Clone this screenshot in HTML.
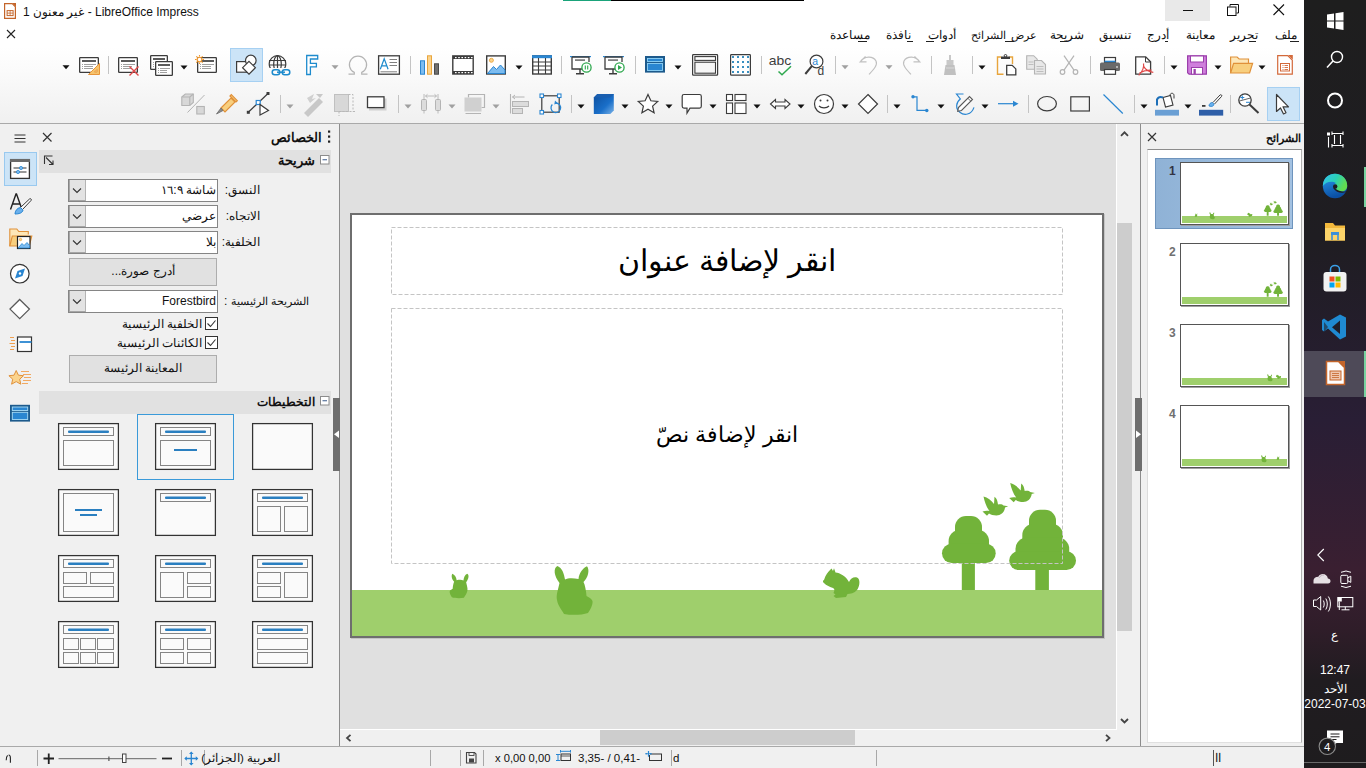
<!DOCTYPE html><html><head><meta charset="utf-8"><style>
html,body{margin:0;padding:0;width:1366px;height:768px;overflow:hidden;background:#fff;font-family:"Liberation Sans",sans-serif;}
.a{position:absolute;}
.t{font-size:12px;line-height:14px;color:#000;white-space:nowrap;}
svg{overflow:visible}
</style></head><body>
<div class="a" style="left:0px;top:0px;width:1304px;height:47px;background:#fff"></div><div class="a" style="left:0px;top:47px;width:1304px;height:76px;background:linear-gradient(#fff 0%,#fbfbfb 30%,#f0f0f0 100%)"></div><div class="a" style="left:0px;top:123px;width:1304px;height:1px;background:#a9a9a9"></div><div class="a" style="left:0px;top:124px;width:340px;height:622px;background:#f0f0f0"></div><div class="a" style="left:339px;top:124px;width:1px;height:622px;background:#8c8c8c"></div><div class="a" style="left:340px;top:124px;width:776px;height:605px;background:#e0e0e0"></div><div class="a" style="left:340px;top:729px;width:776px;height:1px;background:#fff"></div><div class="a" style="left:1116px;top:124px;width:24px;height:622px;background:#f0f0f0"></div><div class="a" style="left:1116px;top:124px;width:1px;height:606px;background:#fff"></div><div class="a" style="left:1117px;top:223px;width:15px;height:408px;background:#cdcdcd"></div><div class="a" style="left:340px;top:730px;width:776px;height:16px;background:#f0f0f0"></div><div class="a" style="left:600px;top:730px;width:255px;height:15px;background:#cdcdcd"></div><div class="a" style="left:1140px;top:124px;width:164px;height:622px;background:#f0f0f0"></div><div class="a" style="left:1140px;top:124px;width:1px;height:622px;background:#8c8c8c"></div><div class="a" style="left:1147px;top:149px;width:155px;height:594px;background:#fff;border-bottom:1px solid #e0e0e0;border-top:1px solid #8c8c8c;border-left:1px solid #dcdcdc;border-right:1px solid #b0b0b0;box-sizing:border-box"></div><div class="a" style="left:0px;top:746px;width:1304px;height:22px;background:#f0f0f0"></div><div class="a" style="left:0px;top:746px;width:1304px;height:1px;background:#a9a9a9"></div><div class="a" style="left:1304px;top:0px;width:62px;height:768px;background:linear-gradient(#1e1e1e 0px,#1f1d22 240px,#291e35 420px,#3a1f31 570px,#2f1d29 630px,#201c20 680px,#1e1c1e 768px)"></div><div class="a" style="left:563px;top:0px;width:48px;height:1px;background:#1aa37a"></div><div class="a" style="left:611px;top:0px;width:193px;height:1px;background:#000"></div><svg class="a" style="left:4px;top:3px" width="12" height="16" viewBox="0 0 12 16"><path d="M0.6 0.6h7.6l3.2 3.2v11.6H0.6z" fill="#fff" stroke="#c4652a" stroke-width="1.2"/><path d="M8.2 0h3.8v3.8z" fill="#c4652a"/><rect x="3.1" y="7.6" width="6" height="5" fill="#fff" stroke="#c4652a" stroke-width="1"/><path d="M3.1 10.1h6M6.1 7.6v5" stroke="#c4652a" stroke-width="0.8"/></svg><div class="a t" style="left:23px;top:4px;font-size:12px;line-height:16px;color:#111">غير معنون 1 - LibreOffice Impress</div><div class="a" style="left:1165px;top:0px;width:45px;height:21px;background:#e9e9e9"></div><div class="a" style="left:1183px;top:10px;width:10px;height:1px;background:#111"></div><svg class="a" style="left:1227px;top:4px" width="12" height="12" viewBox="0 0 12 12"><path d="M3 2.5V0.5h8.5v8.5H9.5" fill="none" stroke="#111" stroke-width="1"/><rect x="0.5" y="3" width="8.5" height="8.5" fill="none" stroke="#111" stroke-width="1"/></svg><svg class="a" style="left:1273px;top:4px" width="12" height="12" viewBox="0 0 12 12"><path d="M0.5 0.5l10.5 10.5M11 0.5L0.5 11" stroke="#111" stroke-width="1.1"/></svg><svg class="a" style="left:7px;top:30px" width="8" height="8" viewBox="0 0 8 8"><path d="M0 0l8 8M8 0l-8 8" stroke="#222" stroke-width="1.1"/></svg><div class="a t" dir="rtl" style="right:69px;top:27px;font-size:12px;line-height:16px;color:#111">ملف</div><div class="a t" dir="rtl" style="right:108px;top:27px;font-size:12px;line-height:16px;color:#111">تحرير</div><div class="a t" dir="rtl" style="right:151px;top:27px;font-size:12px;line-height:16px;color:#111">معاينة</div><div class="a t" dir="rtl" style="right:197px;top:27px;font-size:12px;line-height:16px;color:#111">أدرج</div><div class="a t" dir="rtl" style="right:235px;top:27px;font-size:12px;line-height:16px;color:#111">تنسيق</div><div class="a t" dir="rtl" style="right:282px;top:27px;font-size:12px;line-height:16px;color:#111">شريحة</div><div class="a t" dir="rtl" style="right:329px;top:27px;font-size:11.2px;word-spacing:2px;line-height:16px;color:#111">عرض الشرائح</div><div class="a t" dir="rtl" style="right:410px;top:27px;font-size:12px;line-height:16px;color:#111">أدوات</div><div class="a t" dir="rtl" style="right:455px;top:27px;font-size:12px;line-height:16px;color:#111">نافذة</div><div class="a t" dir="rtl" style="right:496px;top:27px;font-size:12px;line-height:16px;color:#111">مساعدة</div><div class="a" style="left:1290px;top:41px;width:9px;height:1px;background:#222"></div><div class="a" style="left:1249px;top:41px;width:7px;height:1px;background:#222"></div><div class="a" style="left:1165px;top:41px;width:3px;height:1px;background:#222"></div><div class="a" style="left:1060px;top:41px;width:7px;height:1px;background:#222"></div><div class="a" style="left:1005px;top:41px;width:9px;height:1px;background:#222"></div><div class="a" style="left:926px;top:41px;width:8px;height:1px;background:#222"></div><div class="a" style="left:907px;top:41px;width:6px;height:1px;background:#222"></div><div class="a" style="left:858px;top:41px;width:9px;height:1px;background:#222"></div><div class="a" style="left:230px;top:48px;width:33px;height:34px;background:#cce4f7;border:1px solid #a6d0f2;box-sizing:border-box"></div><div class="a" style="left:1267px;top:87px;width:33px;height:34px;background:#cce4f7;border:1px solid #a6d0f2;box-sizing:border-box"></div><div class="a t" dir="rtl" style="right:1044px;top:130px;font-weight:bold;font-size:12.5px;line-height:16px;color:#111">الخصائص</div><div class="a" style="left:4px;top:152px;width:33px;height:34px;background:#cce4f7;border:1px solid #99c9ef;box-sizing:border-box"></div><div class="a" style="left:39px;top:150px;width:292px;height:23px;background:#e1e1e1"></div><div class="a" style="left:39px;top:391px;width:292px;height:23px;background:#e1e1e1"></div><div class="a t" dir="rtl" style="right:1051px;top:153px;font-weight:bold;font-size:12.5px;line-height:16px;color:#111">شريحة</div><div class="a t" dir="rtl" style="right:1051px;top:394px;font-weight:bold;font-size:12px;line-height:16px;color:#111">التخطيطات</div><div class="a" style="left:68px;top:179px;width:150px;height:23px;background:#fff;border:1px solid #858585;box-sizing:border-box"></div><div class="a" style="left:69px;top:180px;width:17px;height:21px;background:#e3e3e3;border-left:1px solid #a6a6a6;border-right:1px solid #b4b4b4;border-bottom:1px solid #a6a6a6;box-sizing:border-box"></div><div class="a t" dir="rtl" style="right:1150px;top:183px;font-size:12px;line-height:15px;color:#111">شاشة ١٦:٩</div><div class="a" style="left:68px;top:205px;width:150px;height:23px;background:#fff;border:1px solid #858585;box-sizing:border-box"></div><div class="a" style="left:69px;top:206px;width:17px;height:21px;background:#e3e3e3;border-left:1px solid #a6a6a6;border-right:1px solid #b4b4b4;border-bottom:1px solid #a6a6a6;box-sizing:border-box"></div><div class="a t" dir="rtl" style="right:1150px;top:209px;font-size:12px;line-height:15px;color:#111">عرضي</div><div class="a" style="left:68px;top:231px;width:150px;height:23px;background:#fff;border:1px solid #858585;box-sizing:border-box"></div><div class="a" style="left:69px;top:232px;width:17px;height:21px;background:#e3e3e3;border-left:1px solid #a6a6a6;border-right:1px solid #b4b4b4;border-bottom:1px solid #a6a6a6;box-sizing:border-box"></div><div class="a t" dir="rtl" style="right:1150px;top:235px;font-size:12px;line-height:15px;color:#111">بلا</div><div class="a" style="left:68px;top:290px;width:150px;height:23px;background:#fff;border:1px solid #858585;box-sizing:border-box"></div><div class="a" style="left:69px;top:291px;width:17px;height:21px;background:#e3e3e3;border-left:1px solid #a6a6a6;border-right:1px solid #b4b4b4;border-bottom:1px solid #a6a6a6;box-sizing:border-box"></div><div class="a t" dir="rtl" style="right:1150px;top:294px;font-size:12px;line-height:15px;color:#111">Forestbird</div><div class="a t" dir="rtl" style="right:1106px;top:183px;font-size:12px;line-height:15px;color:#111">النسق:</div><div class="a t" dir="rtl" style="right:1106px;top:209px;font-size:12px;line-height:15px;color:#111">الاتجاه:</div><div class="a t" dir="rtl" style="right:1106px;top:235px;font-size:12px;line-height:15px;color:#111">الخلفية:</div><div class="a t" dir="rtl" style="right:1057px;top:294px;font-size:11.4px;line-height:15px;color:#111">الشريحة الرئيسية</div><div class="a t" style="left:224px;top:294px;font-size:12px;line-height:15px;color:#111">:</div><div class="a" style="left:69px;top:258px;width:148px;height:28px;background:#e1e1e1;border:1px solid #adadad;box-sizing:border-box"></div><div class="a t" dir="rtl" style="left:69px;width:148px;text-align:center;top:264px;font-size:12px;line-height:15px;color:#111">أدرج صورة...</div><div class="a" style="left:69px;top:355px;width:148px;height:28px;background:#e1e1e1;border:1px solid #adadad;box-sizing:border-box"></div><div class="a t" dir="rtl" style="left:69px;width:148px;text-align:center;top:361px;font-size:12px;line-height:15px;color:#111">المعاينة الرئيسة</div><div class="a" style="left:205px;top:317px;width:13px;height:13px;background:#fff;border:1px solid #333;box-sizing:border-box"></div><div class="a t" dir="rtl" style="right:1164px;top:316px;font-size:11.7px;line-height:15px;color:#111">الخلفية الرئيسية</div><div class="a" style="left:205px;top:336px;width:13px;height:13px;background:#fff;border:1px solid #333;box-sizing:border-box"></div><div class="a t" dir="rtl" style="right:1164px;top:335px;font-size:11.7px;line-height:15px;color:#111">الكائنات الرئيسية</div><div class="a" style="left:137px;top:414px;width:97px;height:66px;border:1px solid #3a9ad9;box-sizing:border-box"></div><div class="a" style="left:333px;top:398px;width:7px;height:73px;background:#6e6e6e"></div><div class="a" style="left:351px;top:214px;width:754px;height:425px;background:#c4c4c4"></div><div class="a" style="left:350px;top:213px;width:754px;height:425px;background:#fff;border:2px solid #6e6e6e;box-sizing:border-box"></div><div class="a" style="left:352px;top:590px;width:750px;height:46px;background:#9fcf6c"></div><div class="a" dir="rtl" style="left:391px;width:672px;top:243px;text-align:center;font-size:30.2px;line-height:36px;color:#000;white-space:nowrap;font-family:'Liberation Sans',sans-serif">انقر لإضافة عنوان</div><div class="a" dir="rtl" style="left:391px;width:672px;top:422px;text-align:center;font-size:22px;line-height:26px;color:#000;white-space:nowrap;font-family:'Liberation Sans',sans-serif">انقر لإضافة نصّ</div><div class="a" style="left:1135px;top:398px;width:7px;height:73px;background:#6e6e6e"></div><div class="a t" dir="rtl" style="right:65px;top:130px;font-weight:bold;font-size:11.4px;line-height:16px;color:#111">الشرائح</div><div class="a" style="left:1155px;top:158px;width:138px;height:71px;background:linear-gradient(90deg,#8fb2d6,#a3c2e2);border:1px solid #6e94bd;box-sizing:border-box"></div><div class="a" style="left:1181px;top:163px;width:109px;height:63px;background:#a0a0a0"></div><div class="a" style="left:1180px;top:162px;width:109px;height:63px;background:#fff;border:1px solid #555;box-sizing:border-box"></div><div class="a" style="left:1182px;top:216px;width:105px;height:7px;background:#9fcf6c"></div><div class="a t" style="left:1169px;top:164px;font-size:12px;line-height:14px;font-weight:bold;color:#333344">1</div><div class="a" style="left:1181px;top:244px;width:109px;height:63px;background:#a0a0a0"></div><div class="a" style="left:1180px;top:243px;width:109px;height:63px;background:#fff;border:1px solid #555;box-sizing:border-box"></div><div class="a" style="left:1182px;top:297px;width:105px;height:7px;background:#9fcf6c"></div><div class="a t" style="left:1169px;top:245px;font-size:12px;line-height:14px;font-weight:bold;color:#707070">2</div><div class="a" style="left:1181px;top:325px;width:109px;height:63px;background:#a0a0a0"></div><div class="a" style="left:1180px;top:324px;width:109px;height:63px;background:#fff;border:1px solid #555;box-sizing:border-box"></div><div class="a" style="left:1182px;top:378px;width:105px;height:7px;background:#9fcf6c"></div><div class="a t" style="left:1169px;top:326px;font-size:12px;line-height:14px;font-weight:bold;color:#707070">3</div><div class="a" style="left:1181px;top:406px;width:109px;height:63px;background:#a0a0a0"></div><div class="a" style="left:1180px;top:405px;width:109px;height:63px;background:#fff;border:1px solid #555;box-sizing:border-box"></div><div class="a" style="left:1182px;top:459px;width:105px;height:7px;background:#9fcf6c"></div><div class="a t" style="left:1169px;top:407px;font-size:12px;line-height:14px;font-weight:bold;color:#707070">4</div><div class="a" style="left:37px;top:750px;width:1px;height:16px;background:#a8a8a8"></div><div class="a" style="left:181px;top:750px;width:1px;height:16px;background:#a8a8a8"></div><div class="a" style="left:204px;top:750px;width:1px;height:16px;background:#a8a8a8"></div><div class="a" style="left:430px;top:750px;width:1px;height:16px;background:#a8a8a8"></div><div class="a" style="left:460px;top:750px;width:1px;height:16px;background:#a8a8a8"></div><div class="a" style="left:483px;top:750px;width:1px;height:16px;background:#a8a8a8"></div><div class="a" style="left:671px;top:750px;width:1px;height:16px;background:#a8a8a8"></div><div class="a" style="left:876px;top:750px;width:1px;height:16px;background:#a8a8a8"></div><div class="a" style="left:1213px;top:750px;width:1px;height:16px;background:#555"></div><div class="a t" dir="rtl" style="right:1086px;top:751px;font-size:11.5px;line-height:15px;color:#111">العربية (الجزائر)</div><div class="a t" style="left:495px;top:751px;font-size:11.2px;line-height:15px;color:#111">x 0,00 0,00</div><div class="a t" style="left:578px;top:751px;font-size:11.5px;line-height:15px;color:#111">3,35- / 0,41-</div><div class="a t" style="left:673px;top:751px;font-size:11.5px;line-height:15px;color:#111">d</div><div class="a t" style="left:1215px;top:751px;font-size:12px;line-height:15px;color:#111">اا</div><div class="a" style="left:1364px;top:167px;width:2px;height:40px;background:#78d3a0"></div><div class="a" style="left:1304px;top:351px;width:62px;height:46px;background:#4e4a58"></div><div class="a" style="left:1364px;top:351px;width:2px;height:46px;background:#78d3a0"></div><div class="a t" style="left:1331px;top:627px;font-size:11.5px;line-height:16px;color:#fff">ع</div><div class="a t" style="left:1304px;width:62px;text-align:center;top:663px;font-size:12px;line-height:15px;color:#fff">12:47</div><div class="a t" dir="rtl" style="left:1304px;width:62px;text-align:center;top:682px;font-size:12px;line-height:15px;color:#fff">الأحد</div><div class="a t" style="left:1304px;width:62px;text-align:center;top:697px;font-size:12px;line-height:15px;color:#fff">2022-07-03</div><div class="a" style="left:1304px;top:762px;width:62px;height:1px;background:#6a6a6a"></div><svg class="a" style="left:0;top:0" width="1366" height="768" viewBox="0 0 1366 768"><path d="M62.5 65.3h7l-3.5 4z" fill="#111"/><rect x="79.65" y="57.65" width="18.7" height="14.7" rx="0.6" fill="#fff" stroke="#3c3c3c" stroke-width="1.3"/><rect x="82" y="60" width="14" height="2" fill="#5a5a5a"/><rect x="82" y="64" width="1" height="1" fill="#a0a0a0"/><rect x="84" y="64" width="12" height="1" fill="#a0a0a0"/><rect x="82" y="66" width="1" height="1" fill="#a0a0a0"/><rect x="84" y="66" width="9" height="1" fill="#a0a0a0"/><rect x="82" y="68" width="1" height="1" fill="#a0a0a0"/><rect x="84" y="68" width="9" height="1" fill="#a0a0a0"/><path d="M99.5 63.5v11h-11z" fill="#f6c46e" stroke="#e8953a" stroke-width="1"/><path d="M97 69.5v2.5h-2.5z" fill="#fde7b8" stroke="#e8953a" stroke-width="0.9"/><rect x="118.65" y="57.65" width="18.7" height="14.7" rx="0.6" fill="#fff" stroke="#3c3c3c" stroke-width="1.3"/><rect x="121" y="60" width="14" height="2" fill="#5a5a5a"/><rect x="121" y="64" width="1" height="1" fill="#a0a0a0"/><rect x="123" y="64" width="12" height="1" fill="#a0a0a0"/><rect x="121" y="66" width="1" height="1" fill="#a0a0a0"/><rect x="123" y="66" width="9" height="1" fill="#a0a0a0"/><rect x="121" y="68" width="1" height="1" fill="#a0a0a0"/><rect x="123" y="68" width="9" height="1" fill="#a0a0a0"/><path d="M129.5 66.5l9 9M138.5 66.5l-9 9" stroke="#e04848" stroke-width="1.4"/><rect x="150.65" y="55.65" width="16.7" height="13.7" rx="0.6" fill="#fff" stroke="#3c3c3c" stroke-width="1.3"/><rect x="153" y="58" width="12" height="2" fill="#5a5a5a"/><rect x="153" y="62" width="1" height="1" fill="#a0a0a0"/><rect x="155" y="62" width="10" height="1" fill="#a0a0a0"/><rect x="153" y="64" width="1" height="1" fill="#a0a0a0"/><rect x="155" y="64" width="7" height="1" fill="#a0a0a0"/><rect x="153" y="66" width="1" height="1" fill="#a0a0a0"/><rect x="155" y="66" width="7" height="1" fill="#a0a0a0"/><rect x="155.65" y="61.65" width="16.7" height="13.7" rx="0.6" fill="#fff" stroke="#3c3c3c" stroke-width="1.3"/><rect x="158" y="64" width="12" height="2" fill="#5a5a5a"/><rect x="158" y="68" width="1" height="1" fill="#a0a0a0"/><rect x="160" y="68" width="10" height="1" fill="#a0a0a0"/><rect x="158" y="70" width="1" height="1" fill="#a0a0a0"/><rect x="160" y="70" width="7" height="1" fill="#a0a0a0"/><rect x="158" y="72" width="1" height="1" fill="#a0a0a0"/><rect x="160" y="72" width="7" height="1" fill="#a0a0a0"/><path d="M180.5 65.5h7l-3.5 4z" fill="#111"/><rect x="197.65" y="57.65" width="18.7" height="14.7" rx="0.6" fill="#fff" stroke="#3c3c3c" stroke-width="1.3"/><rect x="200" y="60" width="14" height="2" fill="#5a5a5a"/><rect x="200" y="64" width="1" height="1" fill="#a0a0a0"/><rect x="202" y="64" width="12" height="1" fill="#a0a0a0"/><rect x="200" y="66" width="1" height="1" fill="#a0a0a0"/><rect x="202" y="66" width="9" height="1" fill="#a0a0a0"/><rect x="200" y="68" width="1" height="1" fill="#a0a0a0"/><rect x="202" y="68" width="9" height="1" fill="#a0a0a0"/><g stroke="#f0962a" stroke-width="1.1"><circle cx="199.5" cy="59.5" r="2.3" fill="#fff"/><path d="M199.5 55v1.6M199.5 62.4v1.6M195 59.5h1.6M202.4 59.5h1.6M196.3 56.3l1.1 1.1M201.6 61.6l1.1 1.1M196.3 62.7l1.1-1.1M201.6 57.4l1.1-1.1"/></g><rect x="236.6" y="61.6" width="10.2" height="10.6" fill="#fff" stroke="#3c3c3c" stroke-width="1.2"/><circle cx="250.8" cy="60.5" r="5.3" fill="#fff" stroke="#3c3c3c" stroke-width="1.2"/><path d="M249 61.3l6.4 6.4-6.4 6.4-6.4-6.4z" fill="#fff" stroke="#3c3c3c" stroke-width="1.2"/><defs><clipPath id="gc"><rect x="260" y="50" width="40" height="18"/></clipPath></defs><g fill="none" stroke="#3c3c3c" stroke-width="1.2" clip-path="url(#gc)"><circle cx="277.5" cy="64" r="8.3"/><ellipse cx="277.5" cy="64" rx="3.8" ry="8.3"/><path d="M269 60.5h17M269 65h17M277.5 55.5v13"/></g><g fill="none" stroke="#1e8bcd" stroke-width="1.5"><rect x="272.2" y="69.7" width="7.6" height="5" rx="2.5"/><rect x="282.2" y="69.7" width="7.6" height="5" rx="2.5"/><path d="M277 72.2h8"/></g><path d="M306.7 55.5h11v3.5h-7.3v4.3h6v3.5h-6v7.7h-3.7z" fill="#fff" stroke="#1e8bcd" stroke-width="1.3"/><path d="M331.5 65.3h7l-3.5 4z" fill="#a0a0a0"/><path d="M348.5 74.2h5.8v-1.8a8.6 8.6 0 1 1 7.4 0v1.8h5.8" fill="none" stroke="#b4b4b4" stroke-width="1.2"/><rect x="378.6" y="55.8" width="20.8" height="18.4" fill="#fff" stroke="#3c3c3c" stroke-width="1.3"/><path d="M380.3 69.3l3.9-10.5 3.9 10.5M381.6 65.8h5.2" fill="none" stroke="#1e8bcd" stroke-width="1.2"/><path d="M389.5 59.5h7.5M389.5 62.5h7.5M389.5 65.5h7.5M380.5 71.8h16.5" stroke="#707070" stroke-width="0.9"/><rect x="420.5" y="60.8" width="4" height="13.4" fill="#7cbcf0" stroke="#2a86d1" stroke-width="1"/><rect x="427.5" y="55.8" width="4" height="18.4" fill="#fbd38c" stroke="#e8a53c" stroke-width="1"/><rect x="434.5" y="63.8" width="4" height="10.4" fill="#707070" stroke="#4a4a4a" stroke-width="1"/><rect x="452.8" y="55.9" width="20.4" height="18.1" fill="#fff" stroke="#3c3c3c" stroke-width="1.4"/><rect x="453" y="56" width="20" height="3" fill="#3c3c3c"/><rect x="453" y="71" width="20" height="3" fill="#3c3c3c"/><rect x="455.0" y="57" width="1.6" height="1.2" fill="#fff"/><rect x="455.0" y="72" width="1.6" height="1.2" fill="#fff"/><rect x="458.2" y="57" width="1.6" height="1.2" fill="#fff"/><rect x="458.2" y="72" width="1.6" height="1.2" fill="#fff"/><rect x="461.4" y="57" width="1.6" height="1.2" fill="#fff"/><rect x="461.4" y="72" width="1.6" height="1.2" fill="#fff"/><rect x="464.6" y="57" width="1.6" height="1.2" fill="#fff"/><rect x="464.6" y="72" width="1.6" height="1.2" fill="#fff"/><rect x="467.8" y="57" width="1.6" height="1.2" fill="#fff"/><rect x="467.8" y="72" width="1.6" height="1.2" fill="#fff"/><rect x="471.0" y="57" width="1.6" height="1.2" fill="#fff"/><rect x="471.0" y="72" width="1.6" height="1.2" fill="#fff"/><rect x="486.7" y="55.9" width="18.6" height="18.1" fill="#fff" stroke="#3c3c3c" stroke-width="1.4"/><circle cx="491.4" cy="60.3" r="2" fill="#fbd38c" stroke="#e8a53c" stroke-width="0.9"/><path d="M487.5 73.5l6-7 3 3 4-4.5 4.5 5v3.5z" fill="#7cbcf0" stroke="#2a86d1" stroke-width="1"/><path d="M515.5 65.5h7l-3.5 4z" fill="#111"/><rect x="532.7" y="55.9" width="18.6" height="18.1" fill="#fff" stroke="#3c3c3c" stroke-width="1.4"/><rect x="532" y="55.2" width="20" height="3" fill="#2a86d1"/><path d="M533 62h18M533 66h18M533 70h18M538.5 58v16M545.5 58v16" stroke="#3c3c3c" stroke-width="1.1"/><path d="M570 56.6h21" stroke="#2a86d1" stroke-width="1.2"/><path d="M572 57v12h13" fill="#fff" stroke="#3c3c3c" stroke-width="1.3"/><path d="M572 57h17v5" fill="none" stroke="#3c3c3c" stroke-width="1.3"/><rect x="575" y="59.3" width="10" height="1.6" fill="#707070"/><path d="M580 69v4.5M576 73.8h8" stroke="#3c3c3c" stroke-width="1.4"/><circle cx="586.5" cy="67.5" r="4.6" fill="#fff" stroke="#2ea84e" stroke-width="1.3"/><path d="M585.3 65.5v4M587.7 65.5v4" stroke="#2ea84e" stroke-width="1.1"/><path d="M603 56.6h21" stroke="#2a86d1" stroke-width="1.2"/><path d="M605 57v12h13" fill="#fff" stroke="#3c3c3c" stroke-width="1.3"/><path d="M605 57h17v5" fill="none" stroke="#3c3c3c" stroke-width="1.3"/><rect x="608" y="59.3" width="10" height="1.6" fill="#707070"/><path d="M613 69v4.5M609 73.8h8" stroke="#3c3c3c" stroke-width="1.4"/><circle cx="619.5" cy="67.5" r="4.6" fill="#fff" stroke="#2ea84e" stroke-width="1.3"/><path d="M618 65v5l4-2.5z" fill="#2ea84e"/><rect x="645" y="56" width="20" height="16.6" fill="#1d5a8c"/><rect x="647.5" y="58.5" width="15" height="3" fill="#2a86d1" stroke="#8fd3f7" stroke-width="0.9"/><rect x="647.5" y="63.5" width="15" height="7" fill="#2a86d1" stroke="#8fd3f7" stroke-width="0.9"/><path d="M674.5 65.5h7l-3.5 4z" fill="#111"/><rect x="692.6" y="54.6" width="25" height="20.6" rx="0.8" fill="#fff" stroke="#3c3c3c" stroke-width="1.2"/><rect x="694.9" y="56.6" width="20.6" height="3.8" fill="none" stroke="#3c3c3c" stroke-width="1.1"/><rect x="694.9" y="62.2" width="20.6" height="11" fill="#f6f6f6" stroke="#3c3c3c" stroke-width="1.1"/><rect x="730.6" y="54.6" width="19.8" height="20.6" rx="0.8" fill="#fff" stroke="#3c3c3c" stroke-width="1.2"/><rect x="732" y="56" width="2" height="2" fill="#3a8fc0"/><rect x="732" y="61" width="2" height="2" fill="#3a8fc0"/><rect x="732" y="66" width="2" height="2" fill="#3a8fc0"/><rect x="732" y="71" width="2" height="2" fill="#3a8fc0"/><rect x="737" y="56" width="2" height="2" fill="#3a8fc0"/><rect x="737" y="61" width="2" height="2" fill="#3a8fc0"/><rect x="737" y="66" width="2" height="2" fill="#3a8fc0"/><rect x="737" y="71" width="2" height="2" fill="#3a8fc0"/><rect x="742" y="56" width="2" height="2" fill="#3a8fc0"/><rect x="742" y="61" width="2" height="2" fill="#3a8fc0"/><rect x="742" y="66" width="2" height="2" fill="#3a8fc0"/><rect x="742" y="71" width="2" height="2" fill="#3a8fc0"/><rect x="747" y="56" width="2" height="2" fill="#3a8fc0"/><rect x="747" y="61" width="2" height="2" fill="#3a8fc0"/><rect x="747" y="66" width="2" height="2" fill="#3a8fc0"/><rect x="747" y="71" width="2" height="2" fill="#3a8fc0"/><text x="768.8" y="65.2" font-family="Liberation Sans" font-size="12.6" fill="#3c3c3c" textLength="22.5" lengthAdjust="spacingAndGlyphs">abc</text><path d="M778.5 71.5l3.5 3.3 9-8.5" fill="none" stroke="#2ea84e" stroke-width="1.5"/><circle cx="816.5" cy="61.5" r="6.4" fill="#fff" stroke="#3c3c3c" stroke-width="1.2"/><path d="M811.8 66.2l-6.5 7.8" stroke="#3c3c3c" stroke-width="2"/><text x="812.3" y="65" font-family="Liberation Sans" font-size="10.5" fill="#2a86d1">a</text><text x="817.5" y="75" font-family="Liberation Sans" font-size="12" fill="#3c3c3c">d</text><path d="M841.5 65.3h7l-3.5 4z" fill="#a0a0a0"/><path d="M865.5 56.3L860.2 61.8h6.3M860.5 61.5C864 56 873 55.5 876 61c2 4-2.5 8.5-7 13.4" fill="none" stroke="#c0c0c0" stroke-width="1.2"/><path d="M885.5 65.3h7l-3.5 4z" fill="#a0a0a0"/><path d="M914.5 56.3L919.8 61.8h-6.3M919.5 61.5C916 56 907 55.5 904 61c-2 4 2.5 8.5 7 13.4" fill="none" stroke="#c0c0c0" stroke-width="1.2"/><path d="M949 55h2v5h2.5v5h-7v-5h2.5z" fill="#c8c8c8"/><path d="M945.5 65h9l1.5 10h-12z" fill="#c0c0c0"/><path d="M946 68h8.5" stroke="#e0e0e0" stroke-width="0.8"/><path d="M978.5 65.5h7l-3.5 4z" fill="#111"/><path d="M1001 57h-3.5v17.3h6" fill="none" stroke="#e8a53c" stroke-width="1.4"/><path d="M1009.5 57h3v7" fill="none" stroke="#e8a53c" stroke-width="1.4"/><path d="M1001 56.5h9v2.5h-9z" fill="#3c3c3c"/><circle cx="1005.5" cy="55.8" r="1.3" fill="none" stroke="#3c3c3c" stroke-width="1"/><path d="M1006.7 65.3h5.5l3.6 3.6v6h-9.1z" fill="#fff" stroke="#3c3c3c" stroke-width="1.3"/><path d="M1026.7 55.7h7l3.5 3.5v10h-10.5z" fill="#e8e8e8" stroke="#b4b4b4" stroke-width="1.1"/><path d="M1034.5 60.5h7l4 4v9.5h-11z" fill="#e8e8e8" stroke="#b4b4b4" stroke-width="1.1"/><path d="M1036.5 66.5h7M1036.5 69h7M1036.5 71.5h7M1028.5 62h5M1028.5 64.5h5" stroke="#b4b4b4" stroke-width="0.8"/><g fill="none" stroke="#b4b4b4" stroke-width="1.2"><circle cx="1062.5" cy="72" r="2.3"/><circle cx="1075.5" cy="72" r="2.3"/><path d="M1064 70.2l10-14.5M1074 70.2l-10-14.5"/></g><rect x="1104.5" y="57.5" width="11" height="5" fill="#fff" stroke="#3c3c3c" stroke-width="1.2"/><path d="M1104.5 61.5h11" stroke="#2a86d1" stroke-width="1.6"/><rect x="1100" y="62.5" width="20" height="8.5" rx="1.5" fill="#6a6a6a"/><rect x="1104.5" y="69.5" width="11" height="4.8" fill="#fff" stroke="#3c3c3c" stroke-width="1.2"/><rect x="1116" y="66.5" width="2" height="1" fill="#fff"/><path d="M1135.7 56.9h10l4.9 4.9v12.3h-14.9z" fill="#fff" stroke="#3c3c3c" stroke-width="1.3"/><path d="M1145.5 57v5h5" fill="none" stroke="#3c3c3c" stroke-width="1"/><path d="M1143.5 63.5c0.8 3.5-1.2 8-4.8 11.8M1143.8 66.5c1.5 3 4.5 5.2 9.5 5.8M1139.5 73c3-1.8 8-3.2 12-2.8" fill="none" stroke="#e04848" stroke-width="1.2"/><path d="M1170.5 65.5h7l-3.5 4z" fill="#111"/><path d="M1187.6 55.8h18.8v18.4h-17.3l-1.5-1.5z" fill="#cf7fdc" stroke="#9b3fab" stroke-width="1.2"/><rect x="1190.5" y="56" width="13" height="6" fill="#fff" stroke="#9b3fab" stroke-width="1"/><rect x="1191.5" y="67.5" width="11" height="6.7" fill="#fff" stroke="#9b3fab" stroke-width="1"/><rect x="1193.5" y="69" width="2.3" height="5" fill="#9b3fab"/><path d="M1214.5 65.5h7l-3.5 4z" fill="#111"/><path d="M1230.6 73V57h6.5l2 2h9.4v4" fill="#fde7b8" stroke="#e0913a" stroke-width="1.2"/><path d="M1230.6 73l3-9.6h19l-3 9.6z" fill="#f8cf7e" stroke="#e0913a" stroke-width="1.2"/><path d="M1258.5 65.5h7l-3.5 4z" fill="#111"/><path d="M1277.7 55.6h10l4.6 4.6v13.9h-14.6z" fill="#fff" stroke="#d3693a" stroke-width="1.2"/><path d="M1288 55h4.8v4.8z" fill="#d3693a"/><rect x="1280.5" y="63.5" width="9" height="7.5" fill="#fff" stroke="#d3693a" stroke-width="1"/><path d="M1282.5 65.5h1M1284.5 65.5h3.5M1282.5 67.5h1M1284.5 67.5h3.5M1282.5 69.5h1M1284.5 69.5h3.5" stroke="#d3693a" stroke-width="0.9"/><g fill="#d8d8d8" stroke="#b4b4b4" stroke-width="1.1"><path d="M181.8 97l3.5-3h8v8.5l-3.5 3h-8z"/><path d="M181.8 97h8v8.5M189.8 97l3.5-3"/><rect x="196.8" y="106.5" width="7.5" height="7.5"/></g><path d="M204.5 95L187.5 112.5" stroke="#b4b4b4" stroke-width="1"/><path d="M221 108l10-10 4 4-10 10z" fill="#f8cf7e" stroke="#e0913a" stroke-width="1.2"/><path d="M230 96l6 6 1.3-1.3-6-6z" fill="#f8cf7e" stroke="#e0913a" stroke-width="1.2"/><path d="M221 108l-4.5 6 6.5-3.5z" fill="#8a8a8a" stroke="#6a6a6a" stroke-width="0.8"/><path d="M248.3 112.3L268 93.5" stroke="#3c3c3c" stroke-width="1.2"/><rect x="246.8" y="110.8" width="3" height="3" fill="#3c3c3c"/><rect x="266.5" y="92" width="3" height="3" fill="#3c3c3c"/><rect x="256.2" y="100.5" width="4" height="4" fill="#fff" stroke="#2a86d1" stroke-width="1.2"/><path d="M260 104.5v10.5l8.5-4.5z" fill="#fff" stroke="#3c3c3c" stroke-width="1.2"/><path d="M286.5 104.6h7l-3.5 4z" fill="#a0a0a0"/><path d="M304 113l15-15 4 4-15 15z" fill="#c8c8c8"/><path d="M316 94l7 0-3 4z" fill="#c8c8c8"/><path d="M307 98l7-4-2 5 4-1-6 5z" fill="#d0d0d0"/><rect x="334.5" y="94.5" width="14" height="17" fill="#d8d8d8" stroke="#c0c0c0" stroke-width="1"/><path d="M348.5 94.5h4.5v17M339 111.5v4.5M339 111.5h17" fill="none" stroke="#b8b8b8" stroke-width="1" stroke-dasharray="2 1.5"/><rect x="369" y="98.5" width="17.5" height="12" fill="#d0d0d0"/><rect x="367.5" y="96.8" width="16.5" height="10.8" fill="#fff" stroke="#3c3c3c" stroke-width="1.3"/><path d="M404.5 104.5h7l-3.5 4z" fill="#a0a0a0"/><g fill="#dcdcdc" stroke="#b4b4b4" stroke-width="1"><rect x="421.5" y="99.5" width="5" height="11" rx="1"/><rect x="435.5" y="99.5" width="5" height="11" rx="1"/></g><path d="M424 94v5.5M424 110.5v3M438 94v5.5M438 110.5v3M425.5 96h11M425.5 96l2-1.7M425.5 96l2 1.7M436.5 96l-2-1.7M436.5 96l-2 1.7" stroke="#b4b4b4" stroke-width="0.9" fill="none"/><path d="M448.5 104.5h7l-3.5 4z" fill="#a0a0a0"/><path d="M468.5 97.5v-3h16v13h-3" fill="none" stroke="#b4b4b4" stroke-width="1.2"/><rect x="465" y="98" width="16" height="13" fill="#d0d0d0" stroke="#d0d0d0" stroke-width="1"/><path d="M465.5 113.5h15.5" stroke="#b4b4b4" stroke-width="1"/><path d="M492.5 104.5h7l-3.5 4z" fill="#a0a0a0"/><path d="M510.5 94v19.5" stroke="#b4b4b4" stroke-width="1.1"/><rect x="512.5" y="101.5" width="16" height="5" fill="#dcdcdc" stroke="#b4b4b4" stroke-width="1"/><rect x="512.5" y="108.5" width="10" height="5" fill="#dcdcdc" stroke="#b4b4b4" stroke-width="1"/><path d="M512.5 97h12M512.5 97l2.5-2M512.5 97l2.5 2" fill="none" stroke="#b4b4b4" stroke-width="1"/><rect x="541.8" y="95.8" width="17.4" height="16.4" fill="none" stroke="#3c3c3c" stroke-width="1.2"/><g fill="#fff" stroke="#2a86d1" stroke-width="1.1"><rect x="540" y="94" width="3.5" height="3.5"/><rect x="557.5" y="94" width="3.5" height="3.5"/><rect x="540" y="110.5" width="3.5" height="3.5"/></g><path d="M552.3 104.5A4.8 4.8 0 1 0 556 103" fill="none" stroke="#2a86d1" stroke-width="1.3"/><path d="M555 100.5l2.8 2.7-3.5 1.3z" fill="#2a86d1"/><path d="M577.5 104.5h7l-3.5 4z" fill="#111"/><defs><linearGradient id="cg" x1="0" y1="0" x2="1" y2="1"><stop offset="0" stop-color="#0d4f9e"/><stop offset="0.6" stop-color="#1a6fc9"/><stop offset="1" stop-color="#7ab3e8"/></linearGradient></defs><path d="M593.8 97.5l3.5-3.5h16.5v16.5l-3.5 3.5h-16.5z" fill="url(#cg)"/><path d="M597.3 94h16.5l-3.5 3.5h-16.5z" fill="#1a5fb0"/><path d="M621.5 104.5h7l-3.5 4z" fill="#111"/><path d="M648 94.5l2.9 6.3 6.8 0.7-5.1 4.6 1.5 6.7-6.1-3.5-6.1 3.5 1.5-6.7-5.1-4.6 6.8-0.7z" fill="#fff" stroke="#3c3c3c" stroke-width="1.2"/><path d="M665.5 104.5h7l-3.5 4z" fill="#111"/><path d="M684 94.5h15.5a1.8 1.8 0 0 1 1.8 1.8v10a1.8 1.8 0 0 1-1.8 1.8h-9.5l-3 5v-5h-3a1.8 1.8 0 0 1-1.8-1.8v-10a1.8 1.8 0 0 1 1.8-1.8z" fill="#fff" stroke="#3c3c3c" stroke-width="1.2"/><path d="M709.5 104.5h7l-3.5 4z" fill="#111"/><g fill="#fff" stroke="#3c3c3c" stroke-width="1.1"><rect x="726.5" y="94.5" width="6" height="6"/><rect x="735" y="94.5" width="11" height="6"/><rect x="726.5" y="103" width="6" height="10.5"/><rect x="735" y="103" width="11" height="10.5"/></g><path d="M753.5 104.5h7l-3.5 4z" fill="#111"/><path d="M770.5 104l5-4.5v2.5h9.5v-2.5l5 4.5-5 4.5v-2.5h-9.5v2.5z" fill="#fff" stroke="#3c3c3c" stroke-width="1.1"/><path d="M797.5 104.5h7l-3.5 4z" fill="#111"/><circle cx="824" cy="104" r="9.5" fill="#fff" stroke="#3c3c3c" stroke-width="1.2"/><circle cx="820.5" cy="100.5" r="1" fill="#3c3c3c"/><circle cx="827.5" cy="100.5" r="1" fill="#3c3c3c"/><path d="M819 106a6 4 0 0 0 10 0" fill="none" stroke="#3c3c3c" stroke-width="1.2"/><path d="M841.5 104.5h7l-3.5 4z" fill="#111"/><path d="M868 94.5l9.5 9.5-9.5 9.5-9.5-9.5z" fill="#fff" stroke="#3c3c3c" stroke-width="1.2"/><path d="M893.5 104.5h7l-3.5 4z" fill="#111"/><path d="M913 96.8h4v13.6h9.5" fill="none" stroke="#2a86d1" stroke-width="1.2"/><circle cx="913" cy="96.8" r="1.7" fill="#2a86d1"/><circle cx="926.8" cy="110.5" r="1.7" fill="#2a86d1"/><path d="M937.5 104.5h7l-3.5 4z" fill="#111"/><path d="M963.5 94h-7l3.8 5c-4.5 3.5-5 9.5-0.5 13.2 4.2 3.5 11.5 3 14.2-4.8" fill="none" stroke="#2a86d1" stroke-width="1.2"/><path d="M958.5 107.5l11-11 3 3-11 11-3.8 0.8z" fill="#fff" stroke="#5a5a5a" stroke-width="1.1"/><path d="M967.8 98.2l3 3" stroke="#5a5a5a" stroke-width="0.9"/><path d="M981.5 104.5h7l-3.5 4z" fill="#111"/><path d="M998 103.7h16" stroke="#2a86d1" stroke-width="1.2"/><path d="M1013 100.7l5.5 3-5.5 3z" fill="#2a86d1"/><ellipse cx="1047" cy="103.7" rx="9.4" ry="7.2" fill="none" stroke="#3c3c3c" stroke-width="1.2"/><rect x="1070.8" y="96.8" width="18.6" height="14.2" fill="none" stroke="#3c3c3c" stroke-width="1.2"/><path d="M1103.5 94.5l19.3 19" stroke="#2a86d1" stroke-width="1.2"/><path d="M1140.5 104.5h7l-3.5 4z" fill="#111"/><rect x="1155" y="109.8" width="24" height="5.8" fill="#6a9fd4"/><path d="M1163 97.5l7.5-2 2.5 9.5-7.5 2z" fill="#fff" stroke="#3c3c3c" stroke-width="1.1"/><path d="M1170 95.5c0-3 4-3 4 0v3" fill="none" stroke="#3c3c3c" stroke-width="1"/><path d="M1163 97.5c-3-1-5 0-6 2v6" fill="none" stroke="#1d6fb8" stroke-width="2"/><path d="M1184.5 104.5h7l-3.5 4z" fill="#111"/><rect x="1199" y="109.8" width="24.2" height="5.8" fill="#2f5fa8"/><rect x="1202" y="105" width="3.5" height="1.8" fill="#3c3c3c"/><path d="M1209 106c0-2 1.5-3.5 3.5-3.5l1.5 1.5c0 2-2 3-5 2z" fill="#6ab0ec" stroke="#2a86d1" stroke-width="0.9"/><path d="M1213 102.5l7-7.5c1-1 2.5 0.5 1.5 1.5l-7 7.5" fill="#fff" stroke="#3c3c3c" stroke-width="1"/><circle cx="1245" cy="100" r="6.2" fill="#fff" stroke="#3c3c3c" stroke-width="1.3"/><path d="M1249.5 104.5l9 8.5" stroke="#3c3c3c" stroke-width="2"/><path d="M1239.5 101l11-3" stroke="#3c3c3c" stroke-width="0.8"/><path d="M1242.3 95.5v4M1240.3 97.5h4M1246 102.3h4" stroke="#2a86d1" stroke-width="1"/><path d="M1276.5 94.5v17l4-3.5 3 6 2.5-1.2-3-6h5.5z" fill="#fff" stroke="#3c3c3c" stroke-width="1.2" stroke-linejoin="round"/><rect x="108" y="56" width="1" height="18" fill="#c4c4c4"/><rect x="410" y="56" width="1" height="18" fill="#c4c4c4"/><rect x="561" y="56" width="1" height="18" fill="#c4c4c4"/><rect x="635" y="56" width="1" height="18" fill="#c4c4c4"/><rect x="761" y="56" width="1" height="18" fill="#c4c4c4"/><rect x="835" y="56" width="1" height="18" fill="#c4c4c4"/><rect x="931" y="56" width="1" height="18" fill="#c4c4c4"/><rect x="972" y="56" width="1" height="18" fill="#c4c4c4"/><rect x="1090" y="56" width="1" height="18" fill="#c4c4c4"/><rect x="1164" y="56" width="1" height="18" fill="#c4c4c4"/><rect x="280" y="95" width="1" height="18" fill="#c4c4c4"/><rect x="398" y="95" width="1" height="18" fill="#c4c4c4"/><rect x="571" y="95" width="1" height="18" fill="#c4c4c4"/><rect x="887" y="95" width="1" height="18" fill="#c4c4c4"/><rect x="1028" y="95" width="1" height="18" fill="#c4c4c4"/><rect x="1134" y="95" width="1" height="18" fill="#c4c4c4"/><rect x="1230" y="95" width="1" height="18" fill="#c4c4c4"/><path d="M14.5 135h11M14.5 138.5h11M14.5 142h11" stroke="#333" stroke-width="1.1"/><path d="M43 133l8.5 8.5M51.5 133L43 141.5" stroke="#333" stroke-width="1.2"/><rect x="328" y="130.5" width="2.2" height="2.2" fill="#222"/><rect x="328" y="135.5" width="2.2" height="2.2" fill="#222"/><rect x="328" y="140.5" width="2.2" height="2.2" fill="#222"/><rect x="10.6" y="159.6" width="18.8" height="18.8" fill="#fff" stroke="#333" stroke-width="1.3"/><rect x="10" y="159" width="20" height="3" fill="#6a6a6a"/><path d="M13.5 168h13M13.5 172h13" stroke="#333" stroke-width="1.1"/><circle cx="21" cy="168" r="1.6" fill="#7cbcf0" stroke="#2a86d1" stroke-width="0.8"/><circle cx="18" cy="172" r="1.6" fill="#7cbcf0" stroke="#2a86d1" stroke-width="0.8"/><path d="M10.5 209.5l5.5-15.5h0.5l5.5 15.5M12.5 204h8" fill="none" stroke="#222" stroke-width="1.4"/><path d="M20.5 207.5l9-8.5c1-1 2.5 0.5 1.5 1.5l-8.5 9" fill="#fff" stroke="#333" stroke-width="1"/><path d="M15 214c0-3 2-6 5.5-6.5l2.5 2.5c-0.5 3-4 4-8 4z" fill="#6ab0ec" stroke="#2a86d1" stroke-width="1"/><path d="M9.8 246V229h7l2 2.5h9.5v3" fill="#fde7b8" stroke="#e0913a" stroke-width="1.1"/><path d="M9.8 246l2.5-10h19.5l-2.5 10z" fill="#f8cf7e" stroke="#e0913a" stroke-width="1.1"/><rect x="17.5" y="236.5" width="12.5" height="12" fill="#fff" stroke="#222" stroke-width="1.2"/><circle cx="20.5" cy="239.5" r="1.2" fill="#fbd38c" stroke="#e8a53c" stroke-width="0.7"/><path d="M18 248l4-4.5 2 2 3-3 2.5 3v2.5z" fill="#7cbcf0" stroke="#2a86d1" stroke-width="0.8"/><circle cx="19.8" cy="273.7" r="9.3" fill="#fff" stroke="#333" stroke-width="1.2"/><path d="M25 268.5l-2.5 7.5-7.5 2.5 2.5-7.5z" fill="#2a86d1"/><circle cx="20" cy="273.5" r="1.2" fill="#fff"/><path d="M19.7 299.5l9.7 9.6-9.7 9.6-9.7-9.6z" fill="#fff" stroke="#5a5a5a" stroke-width="1.3"/><rect x="17.5" y="337" width="14" height="14.5" fill="#fff" stroke="#333" stroke-width="1.2"/><path d="M19.5 342h12" stroke="#2a86d1" stroke-width="1.8"/><path d="M10 337.5h4M11 340.5h4M9.5 343.5h5.5M11 346.5h4M10 349.5h4" stroke="#f0a050" stroke-width="1"/><path d="M16.2 370.5l2.2 4.7 5.1 0.5-3.8 3.5 1.1 5-4.6-2.6-4.6 2.6 1.1-5-3.8-3.5 5.1-0.5z" fill="#fbd38c" stroke="#e0913a" stroke-width="1"/><path d="M21 371.5h8M23 374.5h8M24 377.5h7M23 380.5h8M22 383.5h6" stroke="#f0a050" stroke-width="0.9"/><rect x="10" y="404.8" width="20" height="16.8" fill="#1d5a8c"/><rect x="12.3" y="407" width="15.4" height="3.5" fill="#2a86d1" stroke="#a8dcf7" stroke-width="0.9"/><rect x="12.3" y="412.3" width="15.4" height="7.2" fill="#2a86d1" stroke="#a8dcf7" stroke-width="0.9"/><rect x="320.5" y="155.5" width="8.5" height="8.5" fill="#fff" stroke="#8c8c8c" stroke-width="1"/><path d="M322.5 159.75h4.5" stroke="#3a5a8a" stroke-width="1"/><rect x="320.5" y="396.5" width="8.5" height="8.5" fill="#fff" stroke="#8c8c8c" stroke-width="1"/><path d="M322.5 400.75h4.5" stroke="#3a5a8a" stroke-width="1"/><path d="M44.5 164v-8h8M46 157.5l7 7M53 160.5v4h-4" fill="none" stroke="#333" stroke-width="1.1"/><path d="M73 188.5l4 4 4-4" fill="none" stroke="#333" stroke-width="1.1"/><path d="M73 214.5l4 4 4-4" fill="none" stroke="#333" stroke-width="1.1"/><path d="M73 240.5l4 4 4-4" fill="none" stroke="#333" stroke-width="1.1"/><path d="M73 299.5l4 4 4-4" fill="none" stroke="#333" stroke-width="1.1"/><path d="M207.5 323.5l3 3 5-6" fill="none" stroke="#333" stroke-width="1.1"/><path d="M207.5 342.5l3 3 5-6" fill="none" stroke="#333" stroke-width="1.1"/><rect x="58.6" y="423.6" width="59.8" height="45.8" fill="#fafafa" stroke="#333" stroke-width="1.25"/><rect x="63.5" y="427.5" width="50" height="8" fill="none" stroke="#858585" stroke-width="1"/><rect x="68" y="430.5" width="41" height="2.5" rx="1" fill="#2a7fc0"/><rect x="63.5" y="440.5" width="50" height="25" fill="none" stroke="#858585" stroke-width="1"/><rect x="155.6" y="423.6" width="59.8" height="45.8" fill="#fafafa" stroke="#333" stroke-width="1.25"/><rect x="160.5" y="427.5" width="50" height="8" fill="none" stroke="#858585" stroke-width="1"/><rect x="165" y="430.5" width="41" height="2.5" rx="1" fill="#2a7fc0"/><rect x="160.5" y="440.5" width="50" height="25" fill="none" stroke="#858585" stroke-width="1"/><rect x="174" y="449" width="23" height="2" fill="#2a7fc0"/><rect x="252.6" y="423.6" width="59.8" height="45.8" fill="#fafafa" stroke="#333" stroke-width="1.25"/><rect x="58.6" y="489.6" width="59.8" height="45.8" fill="#fafafa" stroke="#333" stroke-width="1.25"/><rect x="63.5" y="493.5" width="50" height="38" fill="none" stroke="#858585" stroke-width="1"/><rect x="75" y="509" width="27" height="2" fill="#2a7fc0"/><rect x="80" y="514" width="17" height="2" fill="#2a7fc0"/><rect x="155.6" y="489.6" width="59.8" height="45.8" fill="#fafafa" stroke="#333" stroke-width="1.25"/><rect x="160.5" y="493.5" width="50" height="8" fill="none" stroke="#858585" stroke-width="1"/><rect x="165" y="496.5" width="41" height="2.5" rx="1" fill="#2a7fc0"/><rect x="252.6" y="489.6" width="59.8" height="45.8" fill="#fafafa" stroke="#333" stroke-width="1.25"/><rect x="257.5" y="493.5" width="50" height="8" fill="none" stroke="#858585" stroke-width="1"/><rect x="262" y="496.5" width="41" height="2.5" rx="1" fill="#2a7fc0"/><rect x="257.5" y="506.5" width="23" height="25" fill="none" stroke="#858585" stroke-width="1"/><rect x="284.5" y="506.5" width="23" height="25" fill="none" stroke="#858585" stroke-width="1"/><rect x="58.6" y="555.6" width="59.8" height="45.8" fill="#fafafa" stroke="#333" stroke-width="1.25"/><rect x="63.5" y="559.5" width="50" height="8" fill="none" stroke="#858585" stroke-width="1"/><rect x="68" y="562.5" width="41" height="2.5" rx="1" fill="#2a7fc0"/><rect x="63.5" y="572.5" width="23" height="11" fill="none" stroke="#858585" stroke-width="1"/><rect x="90.5" y="572.5" width="23" height="11" fill="none" stroke="#858585" stroke-width="1"/><rect x="63.5" y="586.5" width="50" height="11" fill="none" stroke="#858585" stroke-width="1"/><rect x="155.6" y="555.6" width="59.8" height="45.8" fill="#fafafa" stroke="#333" stroke-width="1.25"/><rect x="160.5" y="559.5" width="50" height="8" fill="none" stroke="#858585" stroke-width="1"/><rect x="165" y="562.5" width="41" height="2.5" rx="1" fill="#2a7fc0"/><rect x="160.5" y="572.5" width="23" height="25" fill="none" stroke="#858585" stroke-width="1"/><rect x="187.5" y="572.5" width="23" height="11" fill="none" stroke="#858585" stroke-width="1"/><rect x="187.5" y="586.5" width="23" height="11" fill="none" stroke="#858585" stroke-width="1"/><rect x="252.6" y="555.6" width="59.8" height="45.8" fill="#fafafa" stroke="#333" stroke-width="1.25"/><rect x="257.5" y="559.5" width="50" height="8" fill="none" stroke="#858585" stroke-width="1"/><rect x="262" y="562.5" width="41" height="2.5" rx="1" fill="#2a7fc0"/><rect x="257.5" y="572.5" width="23" height="11" fill="none" stroke="#858585" stroke-width="1"/><rect x="257.5" y="586.5" width="23" height="11" fill="none" stroke="#858585" stroke-width="1"/><rect x="284.5" y="572.5" width="23" height="25" fill="none" stroke="#858585" stroke-width="1"/><rect x="58.6" y="621.6" width="59.8" height="45.8" fill="#fafafa" stroke="#333" stroke-width="1.25"/><rect x="63.5" y="625.5" width="50" height="8" fill="none" stroke="#858585" stroke-width="1"/><rect x="68" y="628.5" width="41" height="2.5" rx="1" fill="#2a7fc0"/><rect x="63.5" y="638.5" width="15" height="11" fill="none" stroke="#858585" stroke-width="1"/><rect x="63.5" y="652.5" width="15" height="11" fill="none" stroke="#858585" stroke-width="1"/><rect x="80.5" y="638.5" width="15" height="11" fill="none" stroke="#858585" stroke-width="1"/><rect x="80.5" y="652.5" width="15" height="11" fill="none" stroke="#858585" stroke-width="1"/><rect x="97.5" y="638.5" width="16" height="11" fill="none" stroke="#858585" stroke-width="1"/><rect x="97.5" y="652.5" width="16" height="11" fill="none" stroke="#858585" stroke-width="1"/><rect x="155.6" y="621.6" width="59.8" height="45.8" fill="#fafafa" stroke="#333" stroke-width="1.25"/><rect x="160.5" y="625.5" width="50" height="8" fill="none" stroke="#858585" stroke-width="1"/><rect x="165" y="628.5" width="41" height="2.5" rx="1" fill="#2a7fc0"/><rect x="160.5" y="638.5" width="23" height="11" fill="none" stroke="#858585" stroke-width="1"/><rect x="160.5" y="652.5" width="23" height="11" fill="none" stroke="#858585" stroke-width="1"/><rect x="187.5" y="638.5" width="23" height="11" fill="none" stroke="#858585" stroke-width="1"/><rect x="187.5" y="652.5" width="23" height="11" fill="none" stroke="#858585" stroke-width="1"/><rect x="252.6" y="621.6" width="59.8" height="45.8" fill="#fafafa" stroke="#333" stroke-width="1.25"/><rect x="257.5" y="625.5" width="50" height="8" fill="none" stroke="#858585" stroke-width="1"/><rect x="262" y="628.5" width="41" height="2.5" rx="1" fill="#2a7fc0"/><rect x="257.5" y="638.5" width="50" height="11" fill="none" stroke="#858585" stroke-width="1"/><rect x="257.5" y="652.5" width="50" height="11" fill="none" stroke="#858585" stroke-width="1"/><path d="M339 430.5v7.5l-5-3.75z" fill="#fff"/><rect x="391.5" y="227.5" width="671" height="67" fill="none" stroke="#c4c4c4" stroke-width="1" stroke-dasharray="4 2"/><g fill="#72b33a"><rect x="961.8" y="555" width="13.1" height="35.0" rx="0"/><rect x="955" y="516" width="27.0" height="30.0" rx="11"/><rect x="948.6" y="530" width="40.4" height="28.0" rx="11"/><rect x="942" y="543.7" width="53.7" height="19.3" rx="9.7"/><rect x="1035.3" y="560" width="13.6" height="30.0" rx="0"/><rect x="1029" y="509.8" width="27.0" height="30.2" rx="11"/><rect x="1022.3" y="524" width="40.7" height="29.0" rx="11"/><rect x="1015.5" y="537.7" width="53.7" height="27.3" rx="11"/><rect x="1009.2" y="551.3" width="66.8" height="18.7" rx="9.5"/><path transform="translate(983.5 496.5)" d="M0 0C4 1 8 4 10.5 7.5L11 0.3C13.5 2 14 5 14.5 8C16.5 7.5 19 7.5 20 9L24.7 9.8L21.5 11C21 16 17 19 13 19C10 19 7 18 5.5 17L3.5 19.2L-1 15C2 14 4 14 6 14.5C3 11 1 5 0 0z"/><path transform="translate(1010.2 483.1)" d="M0 0C4 1 8 4 10.5 7.5L11 0.3C13.5 2 14 5 14.5 8C16.5 7.5 19 7.5 20 9L24.7 9.8L21.5 11C21 16 17 19 13 19C10 19 7 18 5.5 17L3.5 19.2L-1 15C2 14 4 14 6 14.5C3 11 1 5 0 0z"/><path d="M830.5 569.5L831.5 568.5L833 571L834 568.3L835.5 572.5C840 573 846 576 849 582C850.5 578 854 576.5 857 577.5C860.5 579 860 586 857 590C854.5 593 850 594 847.5 594L846 597L836 598L833.5 596L835.5 594.5L833.5 593C835 590 834.5 589 833 588C829 586.5 826 585 824.5 583.5C822.5 582.5 822.5 580.5 824 580C825.5 575 828 572 830.5 569.5z"/><path d="M557.5 566C553 568 554 576 559.5 583C558 590 556 595 557 600C558 606 562 610 564 614C572 615.5 582 615 588 613C590 610 593 605 592.5 601C591 598 588 597 586.5 596C586 590 585 585 583.5 582C588 578 590 570 587 566.3C583 568 579 573 578.5 579C573 578 568 578 565 579.5C564 573 562 568 557.5 566z"/><path transform="translate(745.9 290.7) scale(-0.5 0.5)" d="M557.5 566C553 568 554 576 559.5 583C558 590 556 595 557 600C558 606 562 610 564 614C572 615.5 582 615 588 613C590 610 593 605 592.5 601C591 598 588 597 586.5 596C586 590 585 585 583.5 582C588 578 590 570 587 566.3C583 568 579 573 578.5 579C573 578 568 578 565 579.5C564 573 562 568 557.5 566z"/></g><rect x="391.5" y="308.5" width="671" height="255" fill="none" stroke="#c4c4c4" stroke-width="1" stroke-dasharray="4 2"/><path d="M1121 135.8l3.5-3.5 3.5 3.5" fill="none" stroke="#444" stroke-width="1.8"/><path d="M1121 719l3.5 3.5 3.5-3.5" fill="none" stroke="#444" stroke-width="1.8"/><path d="M350.5 734.8l-3.5 3.2 3.5 3.2" fill="none" stroke="#444" stroke-width="1.8"/><path d="M1106 734.8l3.5 3.2-3.5 3.2" fill="none" stroke="#444" stroke-width="1.8"/><path d="M1136 430.5v7.5l5-3.75z" fill="#fff"/><path d="M1148 133l8 8M1156 133l-8 8" stroke="#333" stroke-width="1.2"/><g fill="#72b33a" transform="translate(1131.51 132.77) scale(0.1406)"><rect x="961.8" y="555" width="13.1" height="35.0" rx="0"/><rect x="955" y="516" width="27.0" height="30.0" rx="11"/><rect x="948.6" y="530" width="40.4" height="28.0" rx="11"/><rect x="942" y="543.7" width="53.7" height="19.3" rx="9.7"/><rect x="1035.3" y="560" width="13.6" height="30.0" rx="0"/><rect x="1029" y="509.8" width="27.0" height="30.2" rx="11"/><rect x="1022.3" y="524" width="40.7" height="29.0" rx="11"/><rect x="1015.5" y="537.7" width="53.7" height="27.3" rx="11"/><rect x="1009.2" y="551.3" width="66.8" height="18.7" rx="9.5"/><path transform="translate(983.5 496.5)" d="M0 0C4 1 8 4 10.5 7.5L11 0.3C13.5 2 14 5 14.5 8C16.5 7.5 19 7.5 20 9L24.7 9.8L21.5 11C21 16 17 19 13 19C10 19 7 18 5.5 17L3.5 19.2L-1 15C2 14 4 14 6 14.5C3 11 1 5 0 0z"/><path transform="translate(1010.2 483.1)" d="M0 0C4 1 8 4 10.5 7.5L11 0.3C13.5 2 14 5 14.5 8C16.5 7.5 19 7.5 20 9L24.7 9.8L21.5 11C21 16 17 19 13 19C10 19 7 18 5.5 17L3.5 19.2L-1 15C2 14 4 14 6 14.5C3 11 1 5 0 0z"/><path d="M830.5 569.5L831.5 568.5L833 571L834 568.3L835.5 572.5C840 573 846 576 849 582C850.5 578 854 576.5 857 577.5C860.5 579 860 586 857 590C854.5 593 850 594 847.5 594L846 597L836 598L833.5 596L835.5 594.5L833.5 593C835 590 834.5 589 833 588C829 586.5 826 585 824.5 583.5C822.5 582.5 822.5 580.5 824 580C825.5 575 828 572 830.5 569.5z"/><path d="M557.5 566C553 568 554 576 559.5 583C558 590 556 595 557 600C558 606 562 610 564 614C572 615.5 582 615 588 613C590 610 593 605 592.5 601C591 598 588 597 586.5 596C586 590 585 585 583.5 582C588 578 590 570 587 566.3C583 568 579 573 578.5 579C573 578 568 578 565 579.5C564 573 562 568 557.5 566z"/><path transform="translate(745.9 290.7) scale(-0.5 0.5)" d="M557.5 566C553 568 554 576 559.5 583C558 590 556 595 557 600C558 606 562 610 564 614C572 615.5 582 615 588 613C590 610 593 605 592.5 601C591 598 588 597 586.5 596C586 590 585 585 583.5 582C588 578 590 570 587 566.3C583 568 579 573 578.5 579C573 578 568 578 565 579.5C564 573 562 568 557.5 566z"/></g><g fill="#72b33a" transform="translate(1131.51 213.77) scale(0.1406)"><rect x="961.8" y="555" width="13.1" height="35.0" rx="0"/><rect x="955" y="516" width="27.0" height="30.0" rx="11"/><rect x="948.6" y="530" width="40.4" height="28.0" rx="11"/><rect x="942" y="543.7" width="53.7" height="19.3" rx="9.7"/><rect x="1035.3" y="560" width="13.6" height="30.0" rx="0"/><rect x="1029" y="509.8" width="27.0" height="30.2" rx="11"/><rect x="1022.3" y="524" width="40.7" height="29.0" rx="11"/><rect x="1015.5" y="537.7" width="53.7" height="27.3" rx="11"/><rect x="1009.2" y="551.3" width="66.8" height="18.7" rx="9.5"/><path transform="translate(983.5 496.5)" d="M0 0C4 1 8 4 10.5 7.5L11 0.3C13.5 2 14 5 14.5 8C16.5 7.5 19 7.5 20 9L24.7 9.8L21.5 11C21 16 17 19 13 19C10 19 7 18 5.5 17L3.5 19.2L-1 15C2 14 4 14 6 14.5C3 11 1 5 0 0z"/><path transform="translate(1010.2 483.1)" d="M0 0C4 1 8 4 10.5 7.5L11 0.3C13.5 2 14 5 14.5 8C16.5 7.5 19 7.5 20 9L24.7 9.8L21.5 11C21 16 17 19 13 19C10 19 7 18 5.5 17L3.5 19.2L-1 15C2 14 4 14 6 14.5C3 11 1 5 0 0z"/></g><g fill="#72b33a" transform="translate(1131.51 294.77) scale(0.1406)"><g transform="translate(411 0)"><path d="M557.5 566C553 568 554 576 559.5 583C558 590 556 595 557 600C558 606 562 610 564 614C572 615.5 582 615 588 613C590 610 593 605 592.5 601C591 598 588 597 586.5 596C586 590 585 585 583.5 582C588 578 590 570 587 566.3C583 568 579 573 578.5 579C573 578 568 578 565 579.5C564 573 562 568 557.5 566z"/></g><g transform="translate(204 0)"><path d="M830.5 569.5L831.5 568.5L833 571L834 568.3L835.5 572.5C840 573 846 576 849 582C850.5 578 854 576.5 857 577.5C860.5 579 860 586 857 590C854.5 593 850 594 847.5 594L846 597L836 598L833.5 596L835.5 594.5L833.5 593C835 590 834.5 589 833 588C829 586.5 826 585 824.5 583.5C822.5 582.5 822.5 580.5 824 580C825.5 575 828 572 830.5 569.5z"/></g></g><g fill="#72b33a" transform="translate(1131.51 375.77) scale(0.1406)"><g transform="translate(368 0)"><path d="M557.5 566C553 568 554 576 559.5 583C558 590 556 595 557 600C558 606 562 610 564 614C572 615.5 582 615 588 613C590 610 593 605 592.5 601C591 598 588 597 586.5 596C586 590 585 585 583.5 582C588 578 590 570 587 566.3C583 568 579 573 578.5 579C573 578 568 578 565 579.5C564 573 562 568 557.5 566z"/></g><g transform="translate(583 0)"><path transform="translate(745.9 290.7) scale(-0.5 0.5)" d="M557.5 566C553 568 554 576 559.5 583C558 590 556 595 557 600C558 606 562 610 564 614C572 615.5 582 615 588 613C590 610 593 605 592.5 601C591 598 588 597 586.5 596C586 590 585 585 583.5 582C588 578 590 570 587 566.3C583 568 579 573 578.5 579C573 578 568 578 565 579.5C564 573 562 568 557.5 566z"/></g></g><path d="M7.6 755.3c-1 1-1.4 3-1.4 5M8.6 755c1.2 0 1.8 1.5 1.8 3v4.8" fill="none" stroke="#222" stroke-width="1.1"/><path d="M43.5 758.5h10.5M48.75 753.5v10.5" stroke="#222" stroke-width="1.8"/><path d="M58.5 758.7h98" stroke="#666" stroke-width="1"/><path d="M108.9 756.5v4.5" stroke="#555" stroke-width="1.2"/><rect x="122.5" y="754" width="3.5" height="8.5" fill="#fff" stroke="#444" stroke-width="1"/><path d="M162 758.5h10" stroke="#222" stroke-width="1.8"/><g fill="#2a86d1" stroke="#2a86d1"><path d="M191.3 752.5v12M185.3 758.5h12" stroke-width="1.3"/><path d="M191.3 751.5l-2.3 2.5h4.6z M191.3 765.5l-2.3-2.5h4.6z M184.3 758.5l2.5-2.3v4.6z M198.3 758.5l-2.5-2.3v4.6z" stroke="none"/></g><path d="M466.5 752.5h8l1.5 1.5v9h-9.5z" fill="none" stroke="#444" stroke-width="1.1"/><rect x="469" y="752.5" width="5" height="3" fill="none" stroke="#444" stroke-width="0.9"/><rect x="469" y="758.5" width="5" height="4" fill="#444"/><path d="M556 754.5h4M558 754.5v6M556 760.5h4M560.5 751.3h10M560.5 750v2.6M570.5 750v2.6" fill="none" stroke="#2a86d1" stroke-width="1"/><rect x="561" y="754" width="9.5" height="6.5" fill="none" stroke="#333" stroke-width="1"/><path d="M561 756h9.5" stroke="#333" stroke-width="0.8"/><rect x="649.5" y="754" width="12" height="6.5" fill="none" stroke="#333" stroke-width="1"/><path d="M645.5 753.8h6M648.5 751v5.6" stroke="#2a86d1" stroke-width="1.1"/><rect x="647" y="753" width="3" height="2" fill="#f0f0f0"/><path d="M645.5 753.8h6M648.5 751v5.6" stroke="#2a86d1" stroke-width="1.1"/><path d="M1327 14.5l7-1v7h-7zM1335.5 13.3l8-1.3v8.5h-8zM1327 21.5h7v7l-7-1zM1335.5 21.5h8v8.5l-8-1.3z" fill="#fff"/><circle cx="1337" cy="57" r="5.5" fill="none" stroke="#fff" stroke-width="1.4"/><path d="M1333 61l-6 6.5" stroke="#fff" stroke-width="1.5"/><circle cx="1335" cy="100.5" r="7" fill="none" stroke="#fff" stroke-width="2"/><rect x="1327" y="132.5" width="3" height="3" fill="#fff"/><path d="M1328.5 137v10.5M1331.5 133.5h12M1331.5 145.5h12M1332 131.5v3.5M1343 131.5v3.5M1332 144v3.5M1343 144v3.5M1334.5 135v9M1340.5 135v9" fill="none" stroke="#fff" stroke-width="1.1"/><defs><linearGradient id="eb" x1="0" y1="0" x2="0.3" y2="1"><stop offset="0" stop-color="#2a9df0"/><stop offset="1" stop-color="#0b4fa3"/></linearGradient><linearGradient id="eg2" x1="0" y1="0" x2="1" y2="0.4"><stop offset="0" stop-color="#35c3ef"/><stop offset="0.55" stop-color="#2ad0b8"/><stop offset="1" stop-color="#62dc4f"/></linearGradient></defs><circle cx="1335" cy="186" r="12.2" fill="url(#eb)"/><path d="M1322.8 186C1323 178 1329 173.8 1335 173.8C1342 173.8 1347.2 179 1347.2 185.5C1347.2 189.5 1344.5 191.5 1341 191.5C1338 191.5 1335.5 190 1334.5 188C1333.5 186 1334 184 1336 183C1332 180.5 1326 181.5 1322.8 186z" fill="url(#eg2)"/><circle cx="1335.2" cy="186.5" r="2.2" fill="#1e1c22"/><path d="M1333.5 188.5C1335.5 191.5 1339 193 1342.5 192.8C1344.5 192.7 1346 192 1346.5 191.5C1344.5 191.8 1342 191.7 1340 191C1337 190 1335 188.8 1334 186.5z" fill="#1e1c22"/><path d="M1325 223h8l2 2.5h10v15h-20z" fill="#f3b93c"/><rect x="1325" y="228" width="20" height="12.5" fill="#fcd46a"/><rect x="1331" y="232" width="8" height="3" fill="#3b8fd8"/><path d="M1332 235v5M1338 235v5" stroke="#3b8fd8" stroke-width="1.6"/><path d="M1330.5 272v-2.5a4.5 4 0 0 1 9 0v2.5" fill="none" stroke="#3aa0e8" stroke-width="1.5"/><rect x="1323.5" y="272" width="23" height="19.5" rx="3" fill="#f2f2f2"/><rect x="1329.5" y="276.5" width="5" height="5" fill="#f25022"/><rect x="1335.5" y="276.5" width="5" height="5" fill="#7fba00"/><rect x="1329.5" y="282.5" width="5" height="5" fill="#00a4ef"/><rect x="1335.5" y="282.5" width="5" height="5" fill="#ffb900"/><path d="M1340 314.5l6 3v19l-6 3-12-11-4 3-2-1.5v-10l2-1.5 4 3z" fill="#1f8ad2"/><path d="M1340 320.5v13.5l-8-6.75z" fill="#1f1f2a"/><path d="M1324 322l4 5-4 5z" fill="#1f1f2a" opacity="0.6"/><path d="M1326.5 361.5h12l6 6v17h-18z" fill="#fff" stroke="#c4652a" stroke-width="1.5"/><path d="M1338 361h7v7z" fill="#c4652a"/><rect x="1330" y="371" width="11" height="9" fill="#f0c8b0" stroke="#c4652a" stroke-width="1"/><path d="M1332 373.5h7M1332 375.5h7M1332 377.5h7" stroke="#c4652a" stroke-width="0.8"/><path d="M1323.8 549l-6 6 6 6" fill="none" stroke="#fff" stroke-width="1.1"/><path d="M1313.5 583.5h14.5c1.8 0 2.5-1.3 2.5-2.5 0-1.5-1.1-2.6-2.6-2.6-0.5-2.6-2.6-4.3-5.1-4.3-2 0-3.6 1-4.5 2.6-2.6 0-4.8 1.7-4.8 3.8 0 1.5 0 3 0 3z" fill="#e6e0e4"/><path d="M1319 578c1-2 3-3 5-3" fill="none" stroke="#b8a8b4" stroke-width="0.8"/><path d="M1341 572.3q5-2.6 10 0M1341 586.2q5 2.6 10 0" fill="none" stroke="#fff" stroke-width="1"/><rect x="1340.8" y="575.3" width="7" height="8.2" rx="1.2" fill="none" stroke="#fff" stroke-width="1"/><path d="M1347.8 577.8l3-1.6v6.2l-3-1.6" fill="none" stroke="#fff" stroke-width="1"/><path d="M1313.5 600h3l4.2-3.5v13.5l-4.2-3.5h-3z" fill="none" stroke="#fff" stroke-width="1"/><path d="M1323.3 600.5c1.2 1.7 1.2 5.3 0 7M1325.8 598.5c2 2.8 2 8.2 0 11M1328.3 596.5c2.8 3.8 2.8 11.2 0 15" fill="none" stroke="#fff" stroke-width="1"/><rect x="1337.8" y="597.5" width="15" height="9.3" fill="none" stroke="#fff" stroke-width="1"/><rect x="1337.8" y="597.5" width="4" height="4" fill="#fff"/><path d="M1339.3 601.5v8.5M1345.3 606.8v3M1341.5 609.8h8" stroke="#fff" stroke-width="1"/><path d="M1327 730.5h16v12.5h-6.5l-3 3v-3h-6.5z" fill="#fff"/><path d="M1330.5 734h9M1330.5 736.8h9M1330.5 739.5h6" stroke="#1e1c1e" stroke-width="1"/><circle cx="1327.3" cy="746.3" r="8.2" fill="#1e1c1e" stroke="#8a8a8a" stroke-width="1.1"/><text x="1327.3" y="750.5" text-anchor="middle" font-family="Liberation Sans" font-size="11.5" fill="#fff">4</text></svg></body></html>
